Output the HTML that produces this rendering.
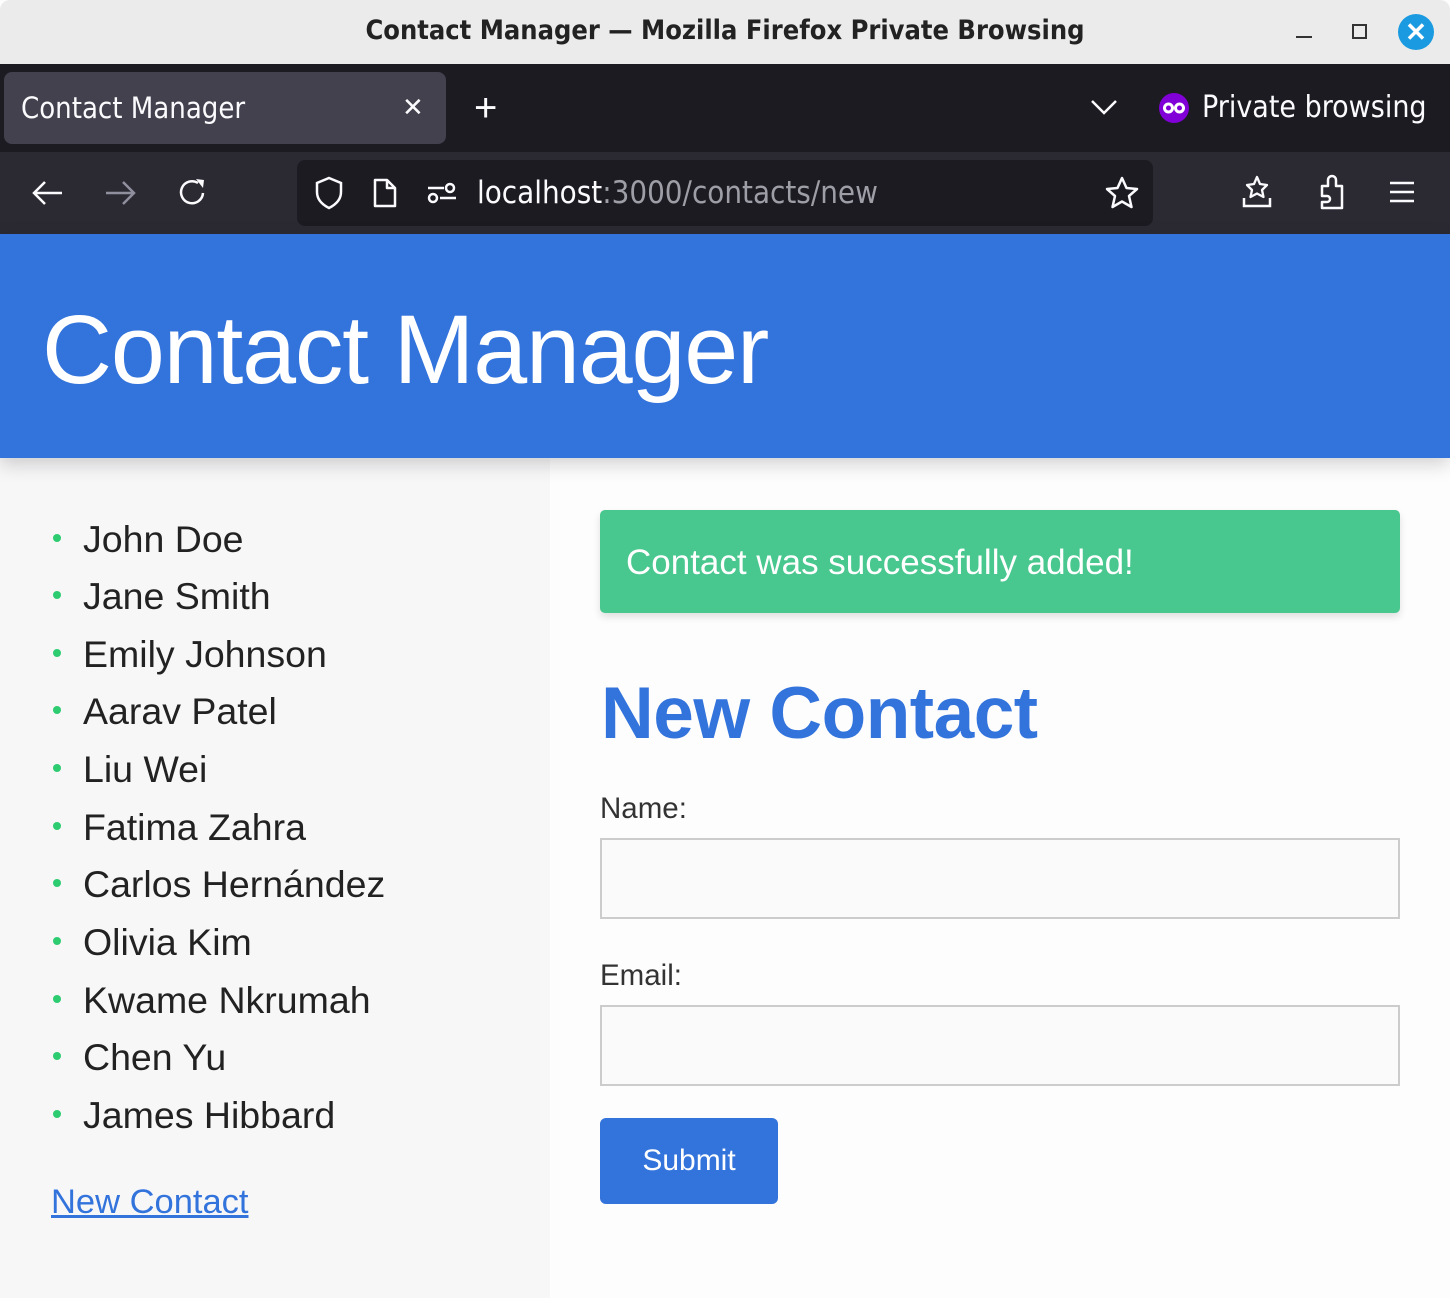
<!DOCTYPE html>
<html><head><meta charset="utf-8"><style>
*{margin:0;padding:0;box-sizing:border-box}
body{width:1450px;height:1298px;overflow:hidden;font-family:"Liberation Sans",sans-serif;background:#fdfdfd;position:relative}
.abs{position:absolute}
#title{left:0;top:0;width:1450px;height:64px;background:#ebebeb;border-radius:10px 10px 0 0}
#tabs{left:0;top:64px;width:1450px;height:88px;background:#1c1b22}
#tb{left:0;top:152px;width:1450px;height:82px;background:#2b2a33}
#hdr{left:0;top:234px;width:1450px;height:224px;background:#3273dc;box-shadow:0 6px 18px rgba(0,0,0,.18);z-index:2}
#side{left:0;top:458px;width:550px;height:840px;background:#f7f7f8}
.li{position:absolute;left:83px;font-size:37.5px;color:#222}
.dot{position:absolute;left:53px;width:8px;height:8px;border-radius:50%;background:#2ecc71}
</style></head><body>
<div id="title" class="abs">
<div class="abs" style="left:0;width:1450px;top:15px;text-align:center;font-size:27px;color:#222;font-weight:bold;font-family:'DejaVu Sans Condensed','Liberation Sans',sans-serif;">Contact Manager — Mozilla Firefox Private Browsing</div>
<div class="abs" style="left:1296px;top:36px;width:16px;height:2px;background:#333"></div>
<div class="abs" style="left:1352px;top:24px;width:15px;height:15px;border:2px solid #333"></div>
<div class="abs" style="left:1398px;top:14px;width:36px;height:36px;border-radius:50%;background:#1a9ae0;color:#fff;font-size:26px;font-weight:bold;text-align:center;line-height:36px">✕</div>
</div>
<div id="tabs" class="abs">
<div class="abs" style="left:4px;top:8px;width:442px;height:72px;background:#42414d;border-radius:8px"></div>
<div class="abs" style="left:21px;top:27px;font-size:29px;color:#fbfbfe;font-family:'DejaVu Sans Condensed',sans-serif">Contact Manager</div>
<div class="abs" style="left:402px;top:28px;font-size:26px;color:#fbfbfe">✕</div>
<div class="abs" style="left:474px;top:22px;font-size:40px;color:#fbfbfe;font-weight:300">+</div>
<svg class="abs" style="left:1090px;top:34px" width="28" height="18"><path d="M2 3 L14 15 L26 3" stroke="#fbfbfe" stroke-width="2.5" fill="none"/></svg>
<svg class="abs" style="left:1158px;top:28px" width="32" height="32"><circle cx="16" cy="16" r="15" fill="#8000d7"/><circle cx="10.5" cy="16" r="4" fill="none" stroke="#fff" stroke-width="3"/><circle cx="21.5" cy="16" r="4" fill="none" stroke="#fff" stroke-width="3"/></svg>
<div class="abs" style="left:1202px;top:26px;font-size:30px;color:#fbfbfe;font-family:'DejaVu Sans Condensed',sans-serif">Private browsing</div>
</div>
<div id="tb" class="abs">
<svg class="abs" style="left:30px;top:26px" width="36" height="30"><path d="M4 15 H32 M15 4 L4 15 L15 26" stroke="#fbfbfe" stroke-width="2.5" fill="none"/></svg>
<svg class="abs" style="left:102px;top:26px" width="36" height="30"><path d="M4 15 H32 M21 4 L32 15 L21 26" stroke="#8f8f9d" stroke-width="2.5" fill="none"/></svg>
<svg class="abs" style="left:176px;top:24px" width="34" height="34"><path d="M27 17 A11 11 0 1 1 22 7" stroke="#fbfbfe" stroke-width="2.5" fill="none"/><path d="M20 3 L28 4 L27 12 Z" fill="#fbfbfe"/></svg>
<div class="abs" style="left:297px;top:8px;width:856px;height:66px;background:#1c1b22;border-radius:8px"></div>
<svg class="abs" style="left:314px;top:24px" width="30" height="34"><path d="M15 2 L27 7 V16 C27 24 21 29 15 32 C9 29 3 24 3 16 V7 Z" stroke="#fbfbfe" stroke-width="2.5" fill="none"/></svg>
<svg class="abs" style="left:372px;top:25px" width="26" height="32"><path d="M3 3 H15 L23 11 V29 H3 Z M15 3 V11 H23" stroke="#fbfbfe" stroke-width="2.5" fill="none" stroke-linejoin="round"/></svg>
<svg class="abs" style="left:426px;top:28px" width="32" height="26"><path d="M2 8 H18 M14 18 H30" stroke="#fbfbfe" stroke-width="2.5"/><circle cx="24" cy="8" r="4" stroke="#fbfbfe" stroke-width="2.5" fill="none"/><circle cx="7" cy="18" r="4" stroke="#fbfbfe" stroke-width="2.5" fill="none"/></svg>
<div class="abs" style="left:477px;top:23px;font-size:31px;color:#fbfbfe;font-family:'DejaVu Sans Condensed',sans-serif">localhost<span style="color:#9e9ea6">:3000/contacts/new</span></div>
<svg class="abs" style="left:1104px;top:23px" width="36" height="36"><path d="M18 3 L22.5 13 L33 14 L25 21 L27.5 32 L18 26.5 L8.5 32 L11 21 L3 14 L13.5 13 Z" stroke="#fbfbfe" stroke-width="2.5" fill="none" stroke-linejoin="round"/></svg>
<svg class="abs" style="left:1240px;top:22px" width="34" height="36"><path d="M17 3 L20 10 L27 11 L22 16 L23.5 23 L17 19.5 L10.5 23 L12 16 L7 11 L14 10 Z" stroke="#fbfbfe" stroke-width="2.3" fill="none" stroke-linejoin="round"/><path d="M4 24 V32 H30 V24" stroke="#fbfbfe" stroke-width="2.5" fill="none"/></svg>
<svg class="abs" style="left:1314px;top:22px" width="34" height="38"><path d="M8 12 H14 V6 A4 4 0 0 1 22 6 V12 H28 V34 H8 V28 H13 A3 3 0 0 0 13 22 H8 Z" stroke="#fbfbfe" stroke-width="2.5" fill="none" stroke-linejoin="round"/></svg>
<svg class="abs" style="left:1388px;top:28px" width="28" height="24"><path d="M2 3 H26 M2 12 H26 M2 21 H26" stroke="#fbfbfe" stroke-width="2.5"/></svg>
</div>
<div id="hdr" class="abs"><div class="abs" style="left:42px;top:60px;font-size:97px;color:#fff;font-weight:300;letter-spacing:-1.2px">Contact Manager</div></div>
<div id="side" class="abs"></div>
<div class="dot" style="top:534px"></div><div class="li" style="top:518px">John Doe</div>
<div class="dot" style="top:591px"></div><div class="li" style="top:575px">Jane Smith</div>
<div class="dot" style="top:649px"></div><div class="li" style="top:633px">Emily Johnson</div>
<div class="dot" style="top:706px"></div><div class="li" style="top:690px">Aarav Patel</div>
<div class="dot" style="top:764px"></div><div class="li" style="top:748px">Liu Wei</div>
<div class="dot" style="top:822px"></div><div class="li" style="top:806px">Fatima Zahra</div>
<div class="dot" style="top:879px"></div><div class="li" style="top:863px">Carlos Hernández</div>
<div class="dot" style="top:937px"></div><div class="li" style="top:921px">Olivia Kim</div>
<div class="dot" style="top:995px"></div><div class="li" style="top:979px">Kwame Nkrumah</div>
<div class="dot" style="top:1052px"></div><div class="li" style="top:1036px">Chen Yu</div>
<div class="dot" style="top:1110px"></div><div class="li" style="top:1094px">James Hibbard</div>
<div class="abs" style="left:51px;top:1183px;font-size:34.5px;color:#3273dc;text-decoration:underline">New Contact</div>
<div class="abs" style="left:600px;top:510px;width:800px;height:103px;background:#48c78e;border-radius:5px;box-shadow:0 4px 8px rgba(0,0,0,.12)"><div class="abs" style="left:26px;top:33px;font-size:35px;color:#fff">Contact was successfully added!</div></div>
<div class="abs" style="left:601px;top:672px;font-size:73px;color:#3273dc;font-weight:bold;letter-spacing:-0.5px">New Contact</div>
<div class="abs" style="left:600px;top:792px;font-size:29.5px;color:#333">Name:</div>
<div class="abs" style="left:600px;top:838px;width:800px;height:81px;border:2px solid #ccc;background:#fafafa"></div>
<div class="abs" style="left:600px;top:959px;font-size:29.5px;color:#333">Email:</div>
<div class="abs" style="left:600px;top:1005px;width:800px;height:81px;border:2px solid #ccc;background:#fafafa"></div>
<div class="abs" style="left:600px;top:1118px;width:178px;height:86px;background:#3273dc;border-radius:6px;color:#fff;font-size:30px;text-align:center;line-height:86px">Submit</div>
</body></html>
